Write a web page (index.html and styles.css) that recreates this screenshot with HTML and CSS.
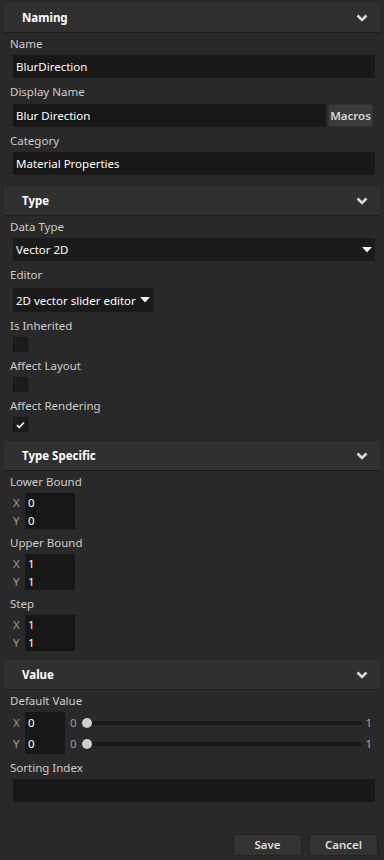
FILE: index.html
```html
<!DOCTYPE html>
<html>
<head>
    <title>Property Editor</title>
    <link rel="stylesheet" href="styles.css">
</head>
<body>
    <div class="panel">
        <div class="group">
            <div class="group-header">
                <span>Naming</span>
                <svg class="chevron" width="12" height="8" viewBox="0 0 12 8"><path d="M1.5 1.5 L6 6 L10.5 1.5" fill="none" stroke="#d8d8d8" stroke-width="2.6"/></svg>
            </div>
            <div class="group-body naming">
                <div class="field">
                    <div class="label">Name</div>
                    <div class="input">BlurDirection</div>
                </div>
                <div class="field">
                    <div class="label">Display Name</div>
                    <div class="input-row">
                        <div class="input">Blur Direction</div>
                        <div class="macros">Macros</div>
                    </div>
                </div>
                <div class="field">
                    <div class="label">Category</div>
                    <div class="input">Material Properties</div>
                </div>
            </div>
        </div>

        <div class="group">
            <div class="group-header">
                <span>Type</span>
                <svg class="chevron" width="12" height="8" viewBox="0 0 12 8"><path d="M1.5 1.5 L6 6 L10.5 1.5" fill="none" stroke="#d8d8d8" stroke-width="2.6"/></svg>
            </div>
            <div class="group-body">
                <div class="field">
                    <div class="label">Data Type</div>
                    <div class="dropdown">
                        <span>Vector 2D</span>
                        <svg width="10" height="6" viewBox="0 0 10 6"><path d="M0 0 H10 L5 5.5 Z" fill="#f0f0f0"/></svg>
                    </div>
                </div>
                <div class="field">
                    <div class="label">Editor</div>
                    <div class="dropdown editor">
                        <span>2D vector slider editor</span>
                        <svg width="10" height="6" viewBox="0 0 10 6"><path d="M0 0 H10 L5 5.5 Z" fill="#f0f0f0"/></svg>
                    </div>
                </div>
                <div class="field">
                    <div class="label">Is Inherited</div>
                    <div class="checkbox"></div>
                </div>
                <div class="field">
                    <div class="label">Affect Layout</div>
                    <div class="checkbox"></div>
                </div>
                <div class="field">
                    <div class="label">Affect Rendering</div>
                    <div class="checkbox">
                        <svg width="9" height="8" viewBox="0 0 9 8"><path d="M1 4.2 L3.3 6.5 L8 1.5" fill="none" stroke="#f0f0f0" stroke-width="1.8"/></svg>
                    </div>
                </div>
            </div>
        </div>

        <div class="group">
            <div class="group-header">
                <span>Type Specific</span>
                <svg class="chevron" width="12" height="8" viewBox="0 0 12 8"><path d="M1.5 1.5 L6 6 L10.5 1.5" fill="none" stroke="#d8d8d8" stroke-width="2.6"/></svg>
            </div>
            <div class="group-body">
                <div class="field">
                    <div class="label">Lower Bound</div>
                    <div class="vector">
                        <span class="axis">X</span><span class="value">0</span>
                        <span class="axis">Y</span><span class="value">0</span>
                    </div>
                </div>
                <div class="field">
                    <div class="label">Upper Bound</div>
                    <div class="vector">
                        <span class="axis">X</span><span class="value">1</span>
                        <span class="axis">Y</span><span class="value">1</span>
                    </div>
                </div>
                <div class="field">
                    <div class="label">Step</div>
                    <div class="vector">
                        <span class="axis">X</span><span class="value">1</span>
                        <span class="axis">Y</span><span class="value">1</span>
                    </div>
                </div>
            </div>
        </div>

        <div class="group">
            <div class="group-header">
                <span>Value</span>
                <svg class="chevron" width="12" height="8" viewBox="0 0 12 8"><path d="M1.5 1.5 L6 6 L10.5 1.5" fill="none" stroke="#d8d8d8" stroke-width="2.6"/></svg>
            </div>
            <div class="group-body">
                <div class="field">
                    <div class="label">Default Value</div>
                    <div class="slider-vector">
                        <span class="axis">X</span><span class="value">0</span>
                        <span class="min">0</span>
                        <div class="slider"><div class="track"></div><div class="thumb"></div></div>
                        <span class="max">1</span>
                        <span class="axis">Y</span><span class="value">0</span>
                        <span class="min">0</span>
                        <div class="slider"><div class="track"></div><div class="thumb"></div></div>
                        <span class="max">1</span>
                    </div>
                </div>
                <div class="field">
                    <div class="label">Sorting Index</div>
                    <div class="input"></div>
                </div>
            </div>
        </div>

        <div class="footer">
            <div class="button">Save</div>
            <div class="button">Cancel</div>
        </div>
    </div>
</body>
</html>
```

FILE: styles.css
```css
body {
    margin: 0;
    background: #292929;
    font-family: "Noto Sans", sans-serif;
    font-size: 11.5px;
    color: #cccccc;
}
.panel {
    width: 376px;
    padding: 3px 4px 0 4px;
}
.group-header {
    height: 29px;
    background: #303030;
    border-bottom: 1px solid #1d1d1d;
    display: flex;
    align-items: center;
    justify-content: space-between;
    padding: 0 12px 0 18px;
    font-weight: bold;
    color: #ffffff;
}
.group-body {
    padding: 0 5px 9px 6px;
}
.group-body.naming {
    padding-bottom: 11px;
}
.field {
    margin-top: 6px;
}
.field:first-child {
    margin-top: 3px;
}
.label {
    line-height: 16px;
    height: 16px;
}
.input {
    margin: 3px 0 0 3px;
    height: 23px;
    line-height: 23px;
    padding-left: 3px;
    background: #181818;
    color: #ffffff;
}
.input-row {
    display: flex;
    gap: 2px;
    margin: 4px 2px 0 0;
}
.input-row .input {
    flex: 1;
    margin-top: 0;
}
.macros {
    width: 43px;
    height: 21px;
    line-height: 21px;
    margin-top: 0;
    text-align: center;
    background: #3b3b3b;
    border: 1px solid #2f2f2f;
    border-radius: 2px;
    color: #d6d6d6;
    font-weight: 600;
}
.dropdown {
    margin: 3px 0 0 3px;
    height: 23px;
    display: flex;
    align-items: center;
    justify-content: space-between;
    padding: 0 3px;
    background: #1b1b1b;
    color: #ffffff;
}
.editor {
    width: 134px;
    height: 24px;
    margin-top: 5px;
}
.checkbox {
    margin: 3px 0 0 3px;
    width: 15px;
    height: 15px;
    box-sizing: border-box;
    background: #1c1c1c;
    border: 1px solid #171717;
    display: flex;
    align-items: center;
    justify-content: center;
}
.vector {
    display: grid;
    grid-template-columns: 12px 50px;
    grid-auto-rows: 18px;
    margin: 3px 0 0 3px;
}
.axis {
    color: #9a9a9a;
    align-self: center;
}
.value {
    background: #171717;
    color: #ffffff;
    padding-left: 3px;
    display: flex;
    align-items: center;
}
.slider-vector {
    display: grid;
    grid-template-columns: 12px 40px auto 1fr auto;
    grid-auto-rows: 21px;
    margin: 3px 0 0 3px;
    align-items: center;
}
.slider-vector .value {
    height: 21px;
}
.min {
    color: #9a9a9a;
    padding-left: 5px;
}
.max {
    color: #a8a8a8;
    padding: 0 3px 0 3px;
}
.slider {
    position: relative;
    height: 10px;
    margin-left: 5px;
    display: flex;
    align-items: center;
}
.track {
    flex: 1;
    margin-left: 5px;
    height: 4px;
    border-radius: 2px;
    background: #1a1a1a;
}
.thumb {
    position: absolute;
    left: 0;
    top: 0;
    width: 10px;
    height: 10px;
    border-radius: 50%;
    background: #cfcfcf;
}
.footer {
    display: flex;
    justify-content: flex-end;
    gap: 7px;
    padding: 23px 2px 0 0;
}
.button {
    width: 67px;
    height: 20px;
    line-height: 20px;
    text-align: center;
    background: #333333;
    border: 1px solid #222222;
    border-radius: 2px;
    color: #dddddd;
    font-weight: 600;
}
```
